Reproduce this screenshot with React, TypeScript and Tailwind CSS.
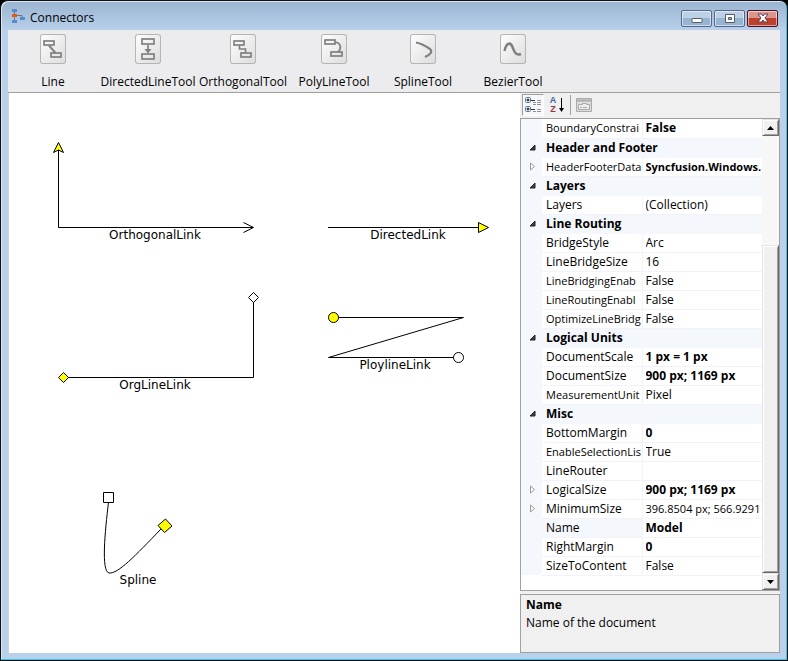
import type { ReactNode } from "react";

type Row =
  | { kind: "category"; name: string }
  | { kind: "prop"; name: string; value: string; bold?: boolean; expandable?: boolean; selected?: boolean; longName?: boolean; longValue?: boolean };

const rows: Row[] = [
  { kind: "prop", name: "BoundaryConstrai", value: "False", bold: true, longName: true },
  { kind: "category", name: "Header and Footer" },
  { kind: "prop", name: "HeaderFooterData", value: "Syncfusion.Windows.", bold: true, expandable: true, longName: true, longValue: true },
  { kind: "category", name: "Layers" },
  { kind: "prop", name: "Layers", value: "(Collection)" },
  { kind: "category", name: "Line Routing" },
  { kind: "prop", name: "BridgeStyle", value: "Arc" },
  { kind: "prop", name: "LineBridgeSize", value: "16" },
  { kind: "prop", name: "LineBridgingEnab", value: "False", longName: true },
  { kind: "prop", name: "LineRoutingEnabl", value: "False", longName: true },
  { kind: "prop", name: "OptimizeLineBridg", value: "False", longName: true },
  { kind: "category", name: "Logical Units" },
  { kind: "prop", name: "DocumentScale", value: "1 px = 1 px", bold: true },
  { kind: "prop", name: "DocumentSize", value: "900 px; 1169 px", bold: true },
  { kind: "prop", name: "MeasurementUnit", value: "Pixel", longName: true },
  { kind: "category", name: "Misc" },
  { kind: "prop", name: "BottomMargin", value: "0", bold: true },
  { kind: "prop", name: "EnableSelectionLis", value: "True", longName: true },
  { kind: "prop", name: "LineRouter", value: "" },
  { kind: "prop", name: "LogicalSize", value: "900 px; 1169 px", bold: true, expandable: true },
  { kind: "prop", name: "MinimumSize", value: "396.8504 px; 566.9291 p", expandable: true, longValue: true },
  { kind: "prop", name: "Name", value: "Model", bold: true, selected: true },
  { kind: "prop", name: "RightMargin", value: "0", bold: true },
  { kind: "prop", name: "SizeToContent", value: "False" },
];

const boxes = (
  <>
    <rect x="4" y="7" width="10" height="4" />
    <rect x="11" y="19" width="10" height="4" />
  </>
);

const tools: { label: string; width: string; icon: ReactNode }[] = [
  { label: "Line", width: "w-[90px]", icon: <>{boxes}<path d="M9 11.5 15.5 19" strokeWidth="2" /></> },
  {
    label: "DirectedLineTool",
    width: "w-[100px]",
    icon: (
      <>
        <rect x="7" y="5" width="12" height="5" />
        <rect x="7" y="20" width="12" height="5" />
        <path d="M13 11v6" />
        <path d="M9.500 15h7l-3.500 4.500z" fill="#808080" stroke="none" />
      </>
    ),
  },
  { label: "OrthogonalTool", width: "w-[90px]", icon: <>{boxes}<path d="M9.5 11v4h6v4" /></> },
  {
    label: "PolyLineTool",
    width: "w-[92px]",
    icon: (
      <>
        <rect x="4" y="6" width="10" height="4" />
        <rect x="10" y="18" width="11" height="4" />
        <path d="M14 8c6 1 7 6 3 10" />
      </>
    ),
  },
  { label: "SplineTool", width: "w-[86px]", icon: <path d="M6 8.500c5 1 9 3 14 6.500q4 4-5 8" strokeWidth="2.200" /> },
  { label: "BezierTool", width: "w-[94px]", icon: <path d="M4.500 17c2-9 6-9 8-4s3 9 8.500 7" strokeWidth="2.500" /> },
];

function TitleBar() {
  const control = "flex h-[17px] w-[31px] items-center justify-center rounded-[2px] border shadow-[inset_0_0_0_1px_#ffffff88]";
  const blue = "border-[#53688a] bg-linear-to-b from-[#bcd0e6] from-50% to-[#98b4d3] to-50%";
  return (
    <header className="flex h-7 shrink-0 items-center pr-[2px] pl-[3px]">
      <svg className="h-4 w-4" viewBox="0 0 16 16" aria-hidden="true">
        <path d="M3.500 3v11M4 7.500h7v2" fill="none" stroke="#6d7783" />
        <path d="M1 1h5v3H1zM1 12h5v3H1zM9 9h5v3H9z" fill="#568bd1" />
        <path d="M1 6h5v3H1z" fill="#e65b12" />
      </svg>
      <h1 className="ml-[3px] flex-1 pt-1 text-xs leading-4">Connectors</h1>
      <div className="flex gap-[2px] pt-1">
        <button aria-label="Minimize" className={`${control} ${blue}`}>
          <svg className="h-3 w-3" viewBox="0 0 12 12"><rect x="1" y="6.500" width="10" height="4" rx=".5" fill="#fff" stroke="#555b68" /></svg>
        </button>
        <button aria-label="Maximize" className={`${control} ${blue}`}>
          <svg className="h-3 w-3" viewBox="0 0 12 12"><path d="M1.500 2.500h9v8h-9zM4.500 5.500h3v2h-3z" fill="#fff" fillRule="evenodd" stroke="#555b68" /></svg>
        </button>
        <button aria-label="Close" className={`${control} border-[#4c1023] bg-linear-to-b from-[#dc958b] from-50% to-[#bd412c] to-50%`}>
          <svg className="h-3 w-3" viewBox="0 0 12 12"><path d="M1 2h3.500L6 4l1.500-2H11L8 6l3 4H7.500L6 8l-1.500 2H1l3-4z" fill="#fff" stroke="#564759" /></svg>
        </button>
      </div>
    </header>
  );
}

function Toolbar() {
  return (
    <nav className="flex h-[63px] shrink-0 border-b border-[#a0a0a0] bg-[#ececee]">
      {tools.map((t) => (
        <button key={t.label} className={`flex shrink-0 flex-col items-center gap-2 pt-1 ${t.width}`}>
          <span className="h-[30px] w-[26px] rounded-[3px] bg-linear-to-br from-white to-[#dcdcdc] shadow-[inset_0_0_0_1px_#b5b5b5]">
            <svg className="h-[30px] w-[26px]" viewBox="0 0 26 30" fill="none" stroke="#808080" strokeWidth="1.700" aria-hidden="true">{t.icon}</svg>
          </span>
          <span className="text-xs leading-5 whitespace-nowrap">{t.label}</span>
        </button>
      ))}
    </nav>
  );
}

function Diagram() {
  return (
    <main className="min-w-0 flex-1 overflow-hidden border-l border-[#d0d4da] bg-white">
      <svg className="h-[560px] w-[511px]" viewBox="9 93 511 560" fill="none" stroke="#000" role="img" aria-label="Connector diagram">
        <path d="M58.500 150V227.500H253M243.500 222.500l10 5-10 5" />
        <path d="M58.500 142.500l5 10-5-2.500-5 2.500z" fill="#ff0" />
        <path d="M328 227.500h150" />
        <path d="M478.500 222.500l10 5-10 5z" fill="#ff0" />
        <path d="M63 377.500H253.500V302" />
        <path d="M63.500 372.500l5 5-5 5-5-5z" fill="#ff0" />
        <path d="M253.500 292.500l5 5-5 5-5-5z" fill="#fff" />
        <path d="M338 317.500h125.500l-135 40H454" />
        <circle cx="333.500" cy="317.500" r="5" fill="#ff0" />
        <circle cx="458.500" cy="357.500" r="5" fill="#fff" />
        <path d="M108.500 502C105 532 101 571 109 573C118 574 135 556 161 529" />
        <path d="M103.500 492.500h10v10h-10z" fill="#fff" />
        <path d="M165.500 519l6.500 7-7.500 6.500-6.500-7z" fill="#ff0" />
        <g className="font-['DejaVu_Sans',sans-serif] text-xs" fill="#000" stroke="none" textAnchor="middle">
          <text x="155" y="239">OrthogonalLink</text>
          <text x="408" y="239">DirectedLink</text>
          <text x="155" y="389">OrgLineLink</text>
          <text x="395" y="369">PloylineLink</text>
          <text x="138" y="584">Spline</text>
        </g>
      </svg>
    </main>
  );
}

function Marker({ row }: { row: Row }) {
  if (row.kind === "category") {
    return <svg className="ml-2 h-[7px] w-[7px]" viewBox="0 0 7 7"><path d="M6 1v5H1z" fill="#404040" stroke="#222" /></svg>;
  }
  return row.expandable ? (
    <svg className="ml-2 h-[9px] w-[7px]" viewBox="0 0 7 9"><path d="M1.500 1l4 3.500-4 3.500z" fill="#fff" stroke="#999" /></svg>
  ) : null;
}

function ScrollBar() {
  const raised = "border border-t-[#e3e3e3] border-r-[#696969] border-b-[#696969] border-l-[#e3e3e3] bg-[#f0f0f0] shadow-[inset_1px_1px_0_#fff,inset_-1px_-1px_0_#a0a0a0]";
  return (
    <div className="flex w-[17px] shrink-0 flex-col bg-[#f7f7f7]">
      <button aria-label="Scroll up" className={`flex h-[17px] items-center justify-center ${raised}`}>
        <svg className="h-1 w-[7px]" viewBox="0 0 7 4"><path d="M0 4h7L3.500 0z" /></svg>
      </button>
      <div className="h-[109px]" />
      <div className={`flex-1 ${raised}`} />
      <button aria-label="Scroll down" className={`flex h-[17px] items-center justify-center ${raised}`}>
        <svg className="h-1 w-[7px]" viewBox="0 0 7 4"><path d="M0 0h7L3.500 4z" /></svg>
      </button>
    </div>
  );
}

function PropertyPanel() {
  return (
    <aside className="flex w-[260px] shrink-0 flex-col bg-[#f0f0f0]">
      <div className="flex h-[25px] shrink-0 items-start gap-[2px] pt-px pl-[2px]">
        <button aria-label="Categorized" className="flex h-[22px] w-[22px] items-center justify-center border border-t-[#a0a0a0] border-r-white border-b-white border-l-[#a0a0a0] bg-[#f7f7f7]">
          <svg className="h-4 w-4" viewBox="0 0 16 16" fill="none">
            <rect x=".5" y=".5" width="5" height="5" rx="1" fill="#fff" stroke="#5279a9" />
            <rect x=".5" y="9.500" width="5" height="5" rx="1" fill="#fff" stroke="#5279a9" />
            <path d="M1.500 3h3M3 1.500v3M1.500 12h3M3 10.500v3" stroke="#000" />
            <path d="M6 3.500h4M6 12.500h4" stroke="#333" />
            <path d="M8 5.500h3m1 0h4M8 7.500h3m1 0h4M12 3.500h4M8 14.500h3m1 0h4M12 12.500h4" stroke="#8a929c" />
          </svg>
        </button>
        <button aria-label="Sort alphabetically" className="flex h-[22px] w-[22px] items-center justify-center">
          <span className="flex w-2 flex-col items-center font-['Liberation_Sans',sans-serif] text-[9px] leading-[9px] font-bold">
            <span className="text-[#3b66a8]">A</span>
            <span className="text-[#a13245]">Z</span>
          </span>
          <svg className="h-4 w-2" viewBox="0 0 8 16">
            <path d="M4.500 1v12" stroke="#000" />
            <path d="M2 11h5l-2.500 4z" />
          </svg>
        </button>
        <span className="mt-px h-5 w-px bg-[#a0a0a0]" />
        <button aria-label="Property pages" disabled className="flex h-[22px] w-[22px] items-center justify-center">
          <svg className="h-4 w-4" viewBox="0 0 16 16" fill="none" stroke="#aaa">
            <path d="M.5 1.500h15v13H.5z" fill="#ddd" />
            <path d="M.5 3.500h15" strokeWidth="2" />
            <path d="M2.500 7.500h4v-1h4v1h3v5h-11zM4 10.500h2m1 0h4" fill="#eee" />
          </svg>
        </button>
      </div>
      <div className="flex min-h-0 flex-1 border border-[#a0a0a0] bg-white">
        <div className="min-w-0 flex-1 overflow-hidden">
          <table className="w-full table-fixed border-collapse text-xs leading-[18px] whitespace-nowrap">
            <colgroup>
              <col className="w-[21px]" />
              <col className="w-[100px]" />
              <col />
            </colgroup>
            <tbody>
              {rows.map((row) => (
                <tr key={row.kind + row.name} className="h-[19px]">
                  <td className="bg-[#f4f7fc] p-0"><Marker row={row} /></td>
                  {row.kind === "category" ? (
                    <th colSpan={2} scope="rowgroup" className="overflow-hidden border-b border-[#f4f7fc] bg-[#f4f7fc] p-0 pl-1 text-left font-bold">{row.name}</th>
                  ) : (
                    <>
                      <th scope="row" className={`border-r border-b border-[#f0f3f9] p-0 pl-1 text-left font-normal ${row.selected ? "bg-[#f4f7fc]" : ""}`}>
                        <div className={`h-[18px] overflow-hidden ${row.longName ? "text-[11px]" : ""}`}>{row.name}</div>
                      </th>
                      <td className={`border-b border-[#f0f3f9] p-0 pl-[3px] ${row.bold ? "font-bold" : ""}`}>
                        <div className={`h-[18px] overflow-hidden ${row.longValue ? "text-[11px]" : ""}`}>{row.value}</div>
                      </td>
                    </>
                  )}
                </tr>
              ))}
            </tbody>
          </table>
        </div>
        <ScrollBar />
      </div>
      <section className="mt-[3px] h-[59px] shrink-0 border border-[#a0a0a0] px-[5px] pt-px text-xs leading-[18px]">
        <h2 className="font-bold">Name</h2>
        <p>Name of the document</p>
      </section>
    </aside>
  );
}

export default function App() {
  return (
    <div className="h-screen bg-black font-['Open_Sans','Noto_Sans',sans-serif] text-black">
      <div className="flex h-full flex-col rounded-t-lg border border-[#111] bg-[#b9d1ea] bg-linear-to-b from-[#9ab4d1] to-[#b9d1ea] to-[30px] px-[7px] pt-px pb-[7px] shadow-[inset_-1px_-1px_0_#35c5e6,inset_1px_1px_0_#dce8f5]">
        <TitleBar />
        <Toolbar />
        <div className="flex min-h-0 flex-1">
          <Diagram />
          <PropertyPanel />
        </div>
      </div>
    </div>
  );
}
